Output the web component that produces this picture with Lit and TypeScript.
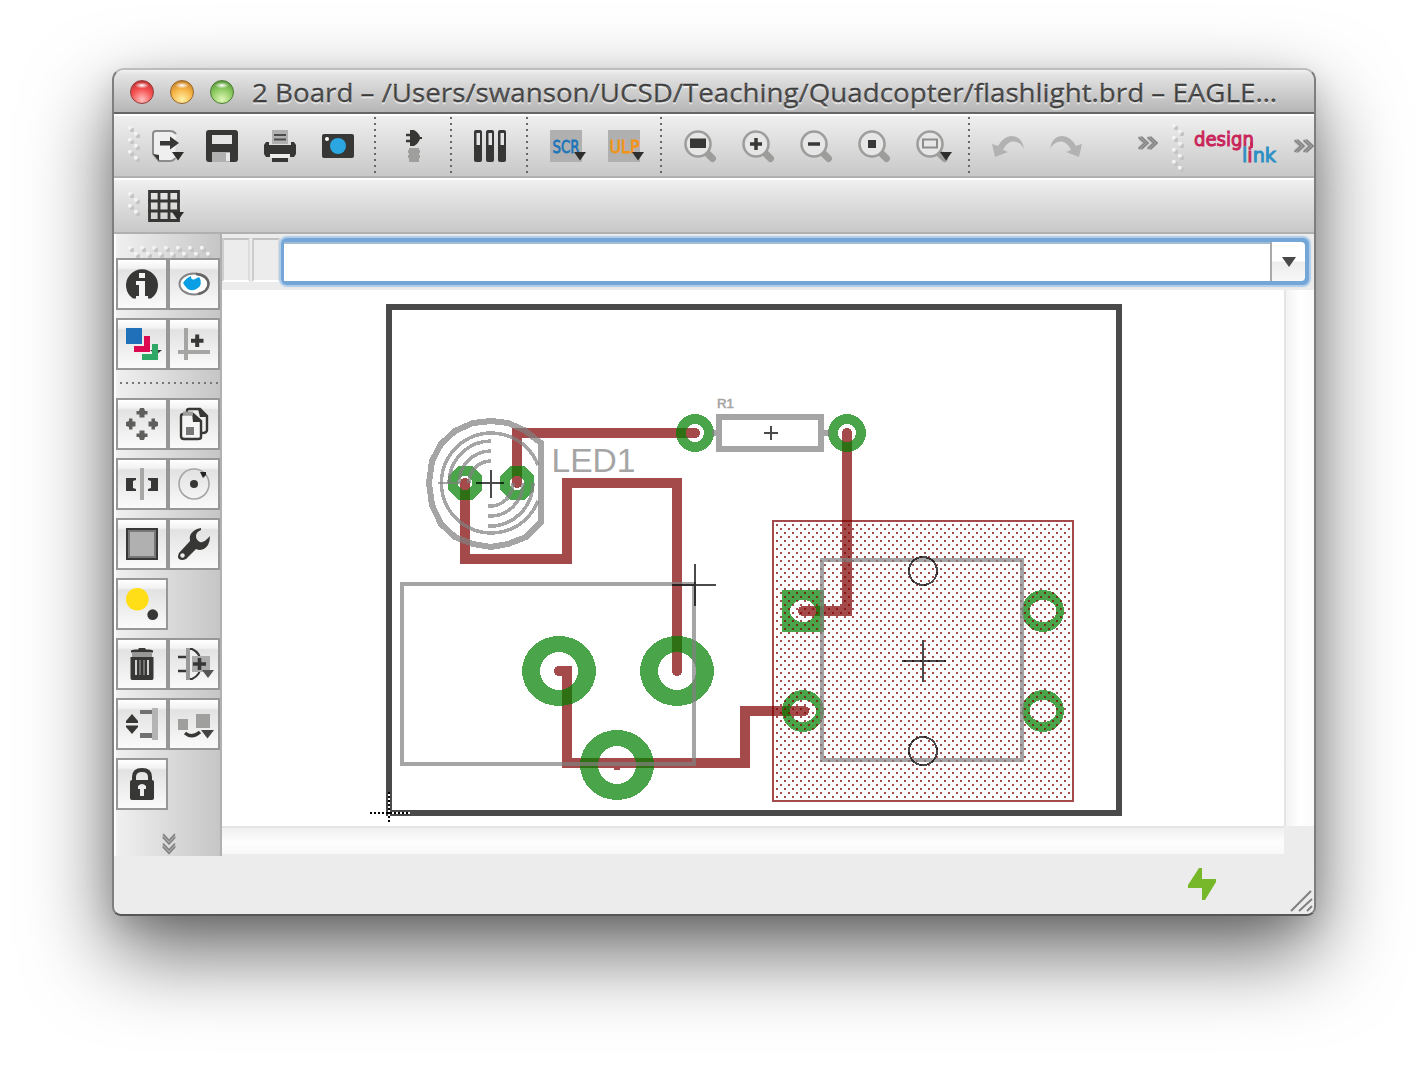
import { LitElement, html, svg, css } from "lit";
import { customElement, property } from "lit/decorators.js";

const D = "#373735";
const G = "#9f9f9d";
const drop = svg`<path d="M24 22h12l-6 8.500z" fill="#2e2e2c"/>`;
const lens = svg`<path d="M22 22L28.500 28.500" stroke="#9d9d9b" stroke-width="7" stroke-linecap="round"/><circle cx="14" cy="14" r="12.500" fill="#e6e6e6" stroke="#9d9d9b" stroke-width="2.600"/>`;
const redo = svg`<path d="M0 19Q2 6 13 6Q21 7 26 16L32 14L29 27L16 22L21 20Q18 13 12 11.500Q4 11 0 19Z" fill="#b2b2b2"/>`;

const icons: Record<string, unknown> = {
  open: svg`<path d="M28 4Q26 1 22 1H8Q5 1 5 4V24L11 31H22Q26 31 27 28" fill="#efefef" stroke="#8c8c8a" stroke-width="2"/><path d="M5 24L11 31V25Z" fill="${D}"/><path d="M12 11H22V6.500L31 13L22 19.500V15.500H12Z" fill="${D}"/>${drop}`,
  save: svg`<rect width="32" height="32" rx="3" fill="${D}"/><rect x="6" y="5" width="20" height="9" fill="#e4e4e4"/><rect x="6" y="22" width="18" height="10" fill="#b0b0b0"/><rect x="20" y="23" width="4" height="8" fill="#e8e8e8"/>`,
  print: svg`<rect x="8" y="0" width="16" height="14" fill="#b0b0b0"/><path d="M10 5h12M10 9.500h12" stroke="#4c4c4a" stroke-width="2"/><path d="M2 12H5V15H27V12H30L32 15V24L30 27H26V24H6V27H2L0 24V15Z" fill="${D}"/><rect x="6" y="24" width="20" height="4" fill="#ececec"/><rect x="8" y="28" width="16" height="4" fill="${D}"/>`,
  camera: svg`<rect y="4" width="32" height="24" rx="2" fill="${D}"/><circle cx="16" cy="16" r="8" fill="#2ba6e1"/><circle cx="5" cy="9" r="2" fill="#fff"/>`,
  plug: svg`<path d="M8 5H14M8 11H14" stroke="${D}" stroke-width="2.500"/><path d="M12 0H16Q21 3 22 7H24V9H22Q20 14 16 16H12Z" fill="${D}"/><path d="M11 18H21V20H22V23H21V25H22V28H21V32H11V28H10V25H11V23H10V20H11Z" fill="${G}"/>`,
  tubes: svg`<rect width="8" height="32" rx="2" fill="${D}"/><rect x="12" width="8" height="32" rx="2" fill="${D}"/><rect x="24" width="8" height="32" rx="2" fill="${D}"/><path d="M2.500 3h3.500v12h-3.500zM14.500 3h3.500v12h-3.500zM26.500 3h3.500v12h-3.500z" fill="#e4e4e4"/>`,
  scr: svg`<rect width="32" height="32" fill="#b0b0b0"/><text x="2.500" y="22.500" class="tag" textLength="27" lengthAdjust="spacingAndGlyphs" fill="#1b75bb" stroke="#1b75bb">SCR</text>${drop}`,
  ulp: svg`<rect width="32" height="32" fill="#b0b0b0"/><text x="1.500" y="22.500" class="tag" textLength="30" lengthAdjust="spacingAndGlyphs" fill="#f39416" stroke="#f39416">ULP</text>${drop}`,
  zfit: svg`${lens}<rect x="6" y="8.500" width="16" height="9.500" fill="${D}"/>`,
  zin: svg`${lens}<path d="M8 14H20M14 8V20" stroke="${D}" stroke-width="3.500"/>`,
  zout: svg`${lens}<path d="M8 14H20" stroke="${D}" stroke-width="3.500"/>`,
  zredraw: svg`${lens}<rect x="10" y="10" width="8" height="8" fill="${D}"/>`,
  zsel: svg`${lens}<rect x="7" y="9.500" width="14" height="8" fill="none" stroke="#8c8c8a" stroke-width="2"/>${drop}`,
  undo: svg`<g transform="translate(32 0) scale(-1 1)">${redo}</g>`,
  redo,
  grid: svg`<path d="M1.500 1.500H30.500V30.500H1.500ZM11 0V32M21 0V32M0 11H32M0 21H32" fill="none" stroke="${D}" stroke-width="2.800"/>${drop}`,
  info: svg`<path d="M7 30.500A16 16 0 1 1 25 30.500Z" fill="${D}"/><path d="M13 5h6v5h-6zM10 13h9v15h3v4h-12v-4h3v-11h-3z" fill="#f4f4f4"/>`,
  eye: svg`<ellipse cx="16" cy="16" rx="14.500" ry="10.500" fill="#fff" stroke="#858585" stroke-width="2"/><path d="M18 6Q30 7 30.500 16Q30 24 20 26" fill="none" stroke="#666" stroke-width="2.500"/><path d="M13 8Q13 13 17 11L21 9Q24 13 22 18Q18 23 12 22Q9 21 7 18L5 15Q8 10 13 8Z" fill="#0a9fe4"/>`,
  layers: svg`<rect width="16" height="16" fill="#1f70b8"/><path d="M8 18H18V8H24V24H8Z" fill="#dc0850"/><path d="M24 22h12l-6 5z" fill="#333"/><path d="M16 26H26V16H32V32H16Z" fill="#2fa866"/>`,
  mark: svg`<path d="M8 0V32M0 24H32" stroke="#a5a5a3" stroke-width="4"/><path d="M13 12.700H25.500M19.200 6.500V19" stroke="${D}" stroke-width="4"/>`,
  move: svg`${[0, 90, 180, 270].map((a) => svg`<path transform="rotate(${a} 16 16)" d="M14 0H18L19 3H21.500V6.500H18.500V9.500H13.500V6.500H10.500V3H13Z" fill="#5e5e5c"/>`)}`,
  copy: svg`<path d="M9 5V2.500Q9 1 11 1H22L29 8V22Q29 25 24 25" fill="#eee" stroke="${D}" stroke-width="2.400"/><path d="M20 1H23L29 7V9H22Z" fill="${D}"/><path d="M3 8Q3 6 6 6H15L23 13V29Q23 31 20 31H6Q3 31 3 28Z" fill="#f4f4f4" stroke="${D}" stroke-width="2.400"/><path d="M14 5L23 14H15Z" fill="${D}"/><path d="M5 5.500H15" stroke="${G}" stroke-width="4" fill="none"/><rect x="8" y="19" width="8" height="8" fill="#777"/>`,
  mirror: svg`<rect x="14" width="4" height="32" fill="#a8a8a6"/><path d="M0 10H10V12L7 13V20L10 21V23H0ZM32 10H22V12L25 13V20L22 21V23H32Z" fill="${D}"/>`,
  rotate: svg`<circle cx="16" cy="16" r="15" fill="none" stroke="#a5a5a3" stroke-width="1.600"/><circle cx="16" cy="16" r="4" fill="${D}"/><path d="M22 4H28V7L25 10Z" fill="#222"/>`,
  group: svg`<rect x="1" y="1" width="30" height="30" fill="#b0b0b0" stroke="${D}" stroke-width="2"/><rect x="3" y="3" width="26" height="26" fill="none" stroke="#777" stroke-width="2"/>`,
  wrench: svg`<path d="M23 0L19 1Q10 5 12 13L1 25Q-1 29 1 31Q4 33 8 31L18 21Q25 24 30 17Q32 13 32 8L29 11Q26 15 22 14Q18 12 18 8Q18 4 23 2Z" fill="${D}"/><circle cx="4.500" cy="27.500" r="2.200" fill="#eee"/>`,
  name: svg`<circle cx="11.300" cy="11.300" r="11.300" fill="#ffde17"/><circle cx="26.700" cy="26.700" r="5.400" fill="${D}"/>`,
  trash: svg`<path d="M5 3Q5 1.500 9 1.500H12L13 0H19L20 1.500H23Q27 1.500 27 3V4.500H5Z" fill="${D}"/><rect x="6" y="4.500" width="20" height="4.500" fill="#999"/><path d="M4.500 9H27.500V30Q27.500 32 26 32H6Q4.500 32 4.500 30Z" fill="${D}"/><path d="M10 12V27M22 12V27" stroke="#d0d0d0" stroke-width="2"/><path d="M14 12V27M18 12V27" stroke="#8a8a8a" stroke-width="1.400"/>`,
  gate: svg`<path d="M0 9H9M0 23H9" stroke="${D}" stroke-width="2.500"/><path d="M9 1H14Q23 5 23 16Q23 27 14 31H9" fill="#f0f0f0" stroke="${D}" stroke-width="2"/><rect x="8" width="4" height="32" fill="#999"/><rect x="14" y="8" width="18" height="16" fill="#ababab"/><path d="M15 16H28M21.500 10V22" stroke="${D}" stroke-width="3.600"/><path d="M24 22h12l-6 8z" fill="#555"/>`,
  pins: svg`<path d="M0 15V13L6 6L12 13V15ZM0 17.500H12V19L6 26L0 19Z" fill="${D}"/><rect x="14" y="2" width="13" height="4" fill="#707070"/><rect x="14" y="25" width="13" height="5" fill="#707070"/><rect x="26" width="6" height="32" fill="#b4b4b4"/>`,
  replace: svg`<rect y="11" width="10" height="11" fill="${G}"/><rect x="18" y="6" width="14" height="14" fill="${G}"/><path d="M7 25Q14 31 22 24" fill="none" stroke="${D}" stroke-width="3.500"/><path d="M23 22h13l-6.500 8.500z" fill="#444"/>`,
  lock: svg`<path d="M8 14V9Q8 2 16 2Q24 2 24 9V14" fill="none" stroke="${D}" stroke-width="4"/><rect x="4" y="12" width="24" height="20" rx="2" fill="${D}"/><path d="M12 18Q16 14 20 18V21H18V28H14V21H12Z" fill="#eee"/>`,
};

@customElement("eagle-icon")
export class EagleIcon extends LitElement {
  @property() name = "";
  static styles = css`
    :host { display: block; width: 32px; height: 32px; flex: none; }
    svg { display: block; overflow: visible; }
    .tag { font: 18px "DejaVu Sans", sans-serif; stroke-width: 0.8px; }
  `;
  render() {
    return html`<svg width="32" height="32" viewBox="0 0 32 32">${icons[this.name]}</svg>`;
  }
}

const ring = (x: number, y: number, rx: number, ry: number, hx: number, hy: number) =>
  `M${x - rx} ${y}a${rx} ${ry} 0 1 0 ${2 * rx} 0a${rx} ${ry} 0 1 0 ${-2 * rx} 0zM${x - hx} ${y}a${hx} ${hy} 0 1 0 ${2 * hx} 0a${hx} ${hy} 0 1 0 ${-2 * hx} 0z`;
const octagon = (x: number, y: number) =>
  `M${x - 7} ${y - 17}h14l10 10v14l-10 10h-14l-10 -10v-14zM${x - 7} ${y}a7 7 0 1 0 14 0a7 7 0 1 0 -14 0z`;

const traces = [
  "M517 483V433H695",
  "M465 483V559H567V483H677V671",
  "M847 433V611H803",
  "M559 671H567V763H745V711H804",
];
const pads = [
  ring(695, 433, 19, 19, 9, 9),
  ring(847, 433, 19, 19, 9, 9),
  octagon(465, 483),
  octagon(517, 483),
  ring(559, 671, 37, 35, 19, 19),
  ring(677, 671, 37, 35, 19, 19),
  ring(617, 765, 37, 35, 19, 19),
  "M782 590h42v42h-42zM790 611a13 11 0 1 0 26 0a13 11 0 1 0 -26 0z",
  ring(803, 711, 21, 21, 13, 11),
  ring(1043, 611, 21, 21, 13.5, 11),
  ring(1043, 711, 21, 21, 13.5, 11),
];

@customElement("board-view")
export class BoardView extends LitElement {
  static styles = css`
    :host { display: block; background: #fff; width: 1062px; height: 536px; }
    svg { display: block; }
    .copper { fill: none; stroke: #800000; stroke-opacity: 0.71; stroke-width: 10; stroke-linecap: round; }
    .pad { fill: #008000; fill-opacity: 0.71; fill-rule: evenodd; }
    .silk { fill: none; stroke: #808080; stroke-opacity: 0.71; }
    .ink { fill: none; stroke: #000; stroke-opacity: 0.71; stroke-width: 2; }
    text { fill: #a5a5a5; font-family: "Liberation Sans", sans-serif; }
  `;
  render() {
    return html`<svg width="1062" height="536" viewBox="222 290 1062 536" shape-rendering="crispEdges">
      <defs>
        <pattern id="dots" width="8" height="8" patternUnits="userSpaceOnUse">
          <rect x="0" y="4" width="2" height="2" fill="#800000" fill-opacity=".71" />
          <rect x="4" y="0" width="2" height="2" fill="#800000" fill-opacity=".71" />
        </pattern>
      </defs>
      <rect x="389" y="307" width="730" height="506" fill="none" stroke="#4a4a4a" stroke-width="6" />
      ${traces.map((d) => svg`<path class="copper" d=${d} />`)}
      <rect x="614" y="768" width="6" height="2" fill="#a54a4a" />
      ${pads.map((d) => svg`<path class="pad" d=${d} />`)}
      <rect x="774" y="522" width="298" height="278" fill="url(#dots)" />
      <rect x="773" y="521" width="300" height="280" fill="none" stroke="#800000" stroke-opacity=".71" stroke-width="2" />
      <rect class="silk" stroke-width="4" x="402" y="584" width="292" height="180" />
      <rect class="silk" stroke-width="4" x="822" y="560" width="200" height="200" />
      <rect class="silk" stroke-width="6" x="719" y="417" width="102" height="32" />
      <path class="silk" stroke-width="6" d="M712 433H716M824 433H830" />
      <path class="silk" stroke-width="6" d="M541 443L524 430L508 423L491 421L473 423L455 431L441 444L432 461L429 483L432 505L441 524L455 537L473 544L491 547L508 544L526 537L541 522Z" />
      <path class="silk" stroke-width="3.500" d="M538 465A50 50 0 1 0 538 501" />
      <path class="silk" stroke-width="3.500" d="M449 483A42 42 0 0 1 491 441M459 483A32 32 0 0 1 491 451M469 483A22 22 0 0 1 491 461M488 526A43 43 0 0 0 533 483M488 516A33 33 0 0 0 523 483M488 506A23 23 0 0 0 513 483" />
      <path class="silk" stroke-width="2" d="M438 483H460" />
      <text x="551.500" y="472" font-size="33" textLength="84" lengthAdjust="spacingAndGlyphs">LED1</text>
      <text x="717" y="408" font-size="13" stroke="#a5a5a5" stroke-width=".6" textLength="17" lengthAdjust="spacingAndGlyphs">R1</text>
      <path class="ink" d="M476 483H504M491 470V498M764 433H778M771 426V440M672 585H716M695 564V606M902 661H946M923 640V682" />
      <circle class="ink" cx="923" cy="571" r="14" />
      <circle class="ink" cx="923" cy="751" r="14" />
      <path d="M370 813H410M389 792V824" stroke="#fff" stroke-width="2" />
      <path d="M370 813H410M389 792V824" stroke="#000" stroke-width="2" stroke-dasharray="2 2" />
    </svg>`;
  }
}

const mainTools = [
  "open", "save", "print", "camera", "|", "plug", "|", "tubes", "|", "scr", "ulp", "|",
  "zfit", "zin", "zout", "zredraw", "zsel", "|", "undo", "redo",
];
const sideRows = [
  ["info", "eye"], ["layers", "mark"], [], ["move", "copy"], ["mirror", "rotate"],
  ["group", "wrench"], ["name"], ["trash", "gate"], ["pins", "replace"], ["lock"],
];

const bump = svg`<rect x="2" y="2" width="4" height="4" rx="1" fill="#c4c4c4"/><rect width="3.600" height="3.600" rx="1" fill="#f3f3f3"/>`;
const gripV = (n: number) => html`<svg width="12" height=${n * 12} viewBox="0 0 12 ${n * 12}">
  ${Array.from({ length: n * 2 }, (_, i) => svg`<g transform="translate(${(i % 2) * 6} ${i * 6})">${bump}</g>`)}
</svg>`;
const gripH = html`<svg width="84" height="12" viewBox="0 0 84 12">
  ${Array.from({ length: 14 }, (_, i) => svg`<g transform="translate(${i * 6} ${(i % 2) * 6})">${bump}</g>`)}
</svg>`;
const more = html`<svg width="20" height="14" viewBox="0 0 20 14"><path d="M1.500 1L8 7L1.500 13M10.500 1L17 7L10.500 13" fill="none" stroke="#b4b4b4" stroke-width="5"/><path d="M.5 1L7 7L.5 13M3.500 1L10 7L3.500 13M9.500 1L16 7L9.500 13M12.500 1L19 7L12.500 13" fill="none" stroke="#808080" stroke-width="1.400"/></svg>`;

@customElement("app-root")
export class AppRoot extends LitElement {
  static styles = css`
    * { box-sizing: border-box; }
    :host { display: flex; width: 1428px; height: 1072px; padding: 68px 0 0 112px; box-sizing: border-box; background: #fff; overflow: hidden; }
    svg { display: block; flex: none; }
    .window { width: 1204px; height: 848px; flex: none; border: 2px solid #7e7e7e; border-top-color: #bcbcbc; border-bottom-color: #565656; border-radius: 12px 12px 9px 9px; box-shadow: 0 36px 84px rgba(0, 0, 0, 0.6), 0 10px 28px rgba(0, 0, 0, 0.12); background: #ececec; display: flex; flex-direction: column; overflow: hidden; }
    .title { height: 44px; flex: none; display: flex; align-items: center; padding-left: 16px; gap: 16px; background: linear-gradient(#f2f2f2 0, #e4e4e4 4px, #b6b6b6 42px); border-bottom: 2px solid #666; }
    .light { width: 24px; height: 24px; border-radius: 50%; flex: none; margin-top: 2px; border: 1px solid #7a4a4a; }
    .red { border-color: #923a3c; background: radial-gradient(ellipse 7px 3px at 50% 20%, #fff, transparent), radial-gradient(circle at 50% 85%, #ffc0bf 0, #f4504f 50%, #b02b2d 100%); }
    .amber { border-color: #94652c; background: radial-gradient(ellipse 7px 3px at 50% 20%, #fff, transparent), radial-gradient(circle at 50% 85%, #fff1a8 0, #f6b445 50%, #b66f1d 100%); }
    .green { border-color: #4d7a33; background: radial-gradient(ellipse 7px 3px at 50% 20%, #fff, transparent), radial-gradient(circle at 50% 85%, #dff7b6 0, #8ecb62 50%, #4a8a30 100%); }
    .caption { font-family: "Open Sans", "Noto Sans", sans-serif; font-size: 26px; fill: #3c3c3c; stroke: #3c3c3c; stroke-width: 0.3px; text-shadow: 0 2px 0 rgba(255, 255, 255, 0.5); }
    .bar { flex: none; display: flex; align-items: center; border-top: 2px solid #fff; border-bottom: 2px solid #b0b0b0; background: linear-gradient(#efefef, #c8c8c8); padding-left: 14px; }
    .main { height: 64px; }
    .second { height: 56px; }
    .tool { padding: 0 13px; }
    .grip { width: 7px; margin-top: -4px; }
    .sep { width: 2px; height: 58px; margin: 0 9px 0 7px; background: repeating-linear-gradient(#666 0 2px, transparent 2px 6px); }
    .more1 { margin: -6px 0 0 43px; }
    .grip2 { margin: 3px 0 0 14px; }
    .logo { margin: 0 14px 0 8px; overflow: visible; }
    .logo text { font: 20px "DejaVu Sans", sans-serif; stroke-width: 1px; }
    .crimson { fill: #c9245a; stroke: #c9245a; }
    .azure { fill: #2c90c4; stroke: #2c90c4; }
    .body { display: flex; flex: none; height: 622px; }
    .side { width: 108px; flex: none; border-left: 2px solid #fff; border-right: 2px solid #b0b0b0; background: linear-gradient(90deg, #f0f0f0, #c6c6c6); display: flex; flex-direction: column; gap: 8px; padding-top: 12px; }
    .handle { padding-left: 12px; height: 12px; margin-bottom: -8px; }
    .row { display: flex; height: 52px; flex: none; }
    .btn { width: 52px; height: 52px; border: 2px solid #979797; padding: 8px; background: linear-gradient(#fff 0, #f2f2f2 8px, #e2e2e2 10px, #fafafa 48px); }
    .rule { height: 2px; margin: 4px 0 6px 4px; background: repeating-linear-gradient(90deg, #777 0 2px, transparent 2px 6px); }
    .down { margin: 15px 0 0 46px; }
    .work { width: 1092px; flex: none; }
    .command { height: 56px; display: flex; padding-top: 2px; }
    .slot { width: 28px; height: 44px; margin: 2px 2px 0 0; border: 2px solid #ddd; border-top-color: #c2c2c2; border-left-color: #cdcdcd; border-bottom-color: #fff; }
    .combo { width: 1028px; height: 47px; margin: 2px 0 0 -1px; border-radius: 6px; box-shadow: 0 0 1px 2px #b0cdea; background: #74a6d8; padding: 4px 4px 4px 3px; display: flex; }
    .entry { flex: 1; background: #fff; border-top: 2px solid #a3bcd6; }
    .pick { width: 35px; border-left: 2px solid #aaa; border-radius: 0 4px 4px 0; background: linear-gradient(#fff 0 48%, #ececec 52%, #f8f8f8); display: flex; align-items: center; justify-content: center; }
    .view { display: flex; height: 536px; background: #fff; }
    .vscroll { width: 30px; border-left: 2px solid #e4e4e4; background: linear-gradient(90deg, #f3f3f3, #fff 50%, #fafafa); }
    .hscroll { width: 1062px; height: 28px; border-top: 2px solid #e4e4e4; background: linear-gradient(#f0f0f0, #fdfdfd 55%, #f8f8f8); }
    .status { flex: 1; display: flex; padding: 12px 0 0 1074px; gap: 74px; }
    .resize { margin-top: 22px; }
  `;

  render() {
    return html`<div class="window">
      <div class="title">
        <div class="light red"></div>
        <div class="light amber"></div>
        <div class="light green"></div>
        <svg width="1040" height="42" viewBox="0 0 1040 42">
          <text class="caption" x="2" y="31.500" textLength="1025" lengthAdjust="spacingAndGlyphs">2 Board – /Users/swanson/UCSD/Teaching/Quadcopter/flashlight.brd – EAGLE…</text>
        </svg>
      </div>
      <div class="bar main">
        <div class="grip">${gripV(3)}</div>
        ${mainTools.map((t) => (t === "|" ? html`<div class="sep"></div>` : html`<div class="tool"><eagle-icon name=${t}></eagle-icon></div>`))}
        <div class="more1">${more}</div>
        <div class="grip2">${gripV(4)}</div>
        <svg class="logo" width="88" height="44" viewBox="1192 124 88 44">
          <text class="crimson" x="1194" y="146" textLength="60" lengthAdjust="spacingAndGlyphs">design</text>
          <path d="M1251.500 142V148" stroke="#c9245a" stroke-width="2.600" />
          <text class="azure" x="1242" y="162" textLength="34" lengthAdjust="spacingAndGlyphs">l<tspan class="crimson">i</tspan>nk</text>
        </svg>
        ${more}
      </div>
      <div class="bar second">
        <div class="grip">${gripV(2)}</div>
        <div class="tool"><eagle-icon name="grid"></eagle-icon></div>
      </div>
      <div class="body">
        <div class="side">
          <div class="handle">${gripH}</div>
          ${sideRows.map((r) =>
            r.length
              ? html`<div class="row">${r.map((n) => html`<div class="btn"><eagle-icon name=${n}></eagle-icon></div>`)}</div>`
              : html`<div class="rule"></div>`
          )}
          <svg class="down" width="14" height="22" viewBox="0 0 14 22"><path d="M1 2.500L7 9L13 2.500M1 12L7 18.500L13 12" fill="none" stroke="#b0b0b0" stroke-width="4" /><path d="M1 1L7 7.500L13 1M1 4.500L7 11L13 4.500M1 10.500L7 17L13 10.500M1 14L7 20.500L13 14" fill="none" stroke="#808080" stroke-width="1.500" /></svg>
        </div>
        <div class="work">
          <div class="command">
            <div class="slot"></div>
            <div class="slot"></div>
            <div class="combo">
              <div class="entry"></div>
              <div class="pick"><svg width="14" height="10" viewBox="0 0 14 10"><path d="M0 0H14L7 10Z" fill="#484848" /></svg></div>
            </div>
          </div>
          <div class="view"><board-view></board-view><div class="vscroll"></div></div>
          <div class="hscroll"></div>
        </div>
      </div>
      <div class="status">
        <svg width="28" height="32" viewBox="0 0 28 32"><path d="M11 0H14V11H28V14L17 32H14V20H0V17Z" fill="#76b82a" /></svg>
        <svg class="resize" width="24" height="22" viewBox="0 0 24 22"><path d="M1 21L21 1M9 21L22 9M17 21L22 16" stroke="#808080" stroke-width="2" /></svg>
      </div>
    </div>`;
  }
}
